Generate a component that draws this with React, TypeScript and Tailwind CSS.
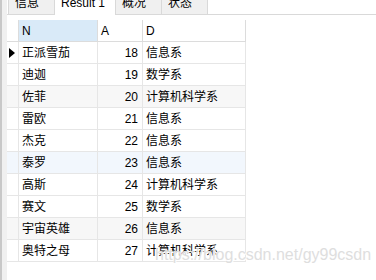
const rows: [string, number, string][] = [
  ['正派雪茄', 18, '信息系'],
  ['迪迦', 19, '数学系'],
  ['佐菲', 20, '计算机科学系'],
  ['雷欧', 21, '信息系'],
  ['杰克', 22, '信息系'],
  ['泰罗', 23, '信息系'],
  ['高斯', 24, '计算机科学系'],
  ['赛文', 25, '数学系'],
  ['宇宙英雄', 26, '信息系'],
  ['奥特之母', 27, '计算机科学系'],
];

const rowBg = (i: number) =>
  i === 2 || i === 8 ? 'bg-[#f7f7f7]' : i === 5 ? 'bg-[#f2f7fd]' : 'bg-white';

function Tab({ label, width, active }: { label: string; width: string; active?: boolean }) {
  return (
    <div
      className={`${width} h-[15px] overflow-hidden border-r border-[#d9d9d9] pl-[6px] ${
        active ? 'bg-white' : 'bg-[#f0f0f0] border-b'
      }`}
    >
      <div className="-mt-[3px] text-[12px] leading-[12px] text-black whitespace-nowrap">{label}</div>
    </div>
  );
}

export default function App() {
  return (
    <div
      className="relative flex w-[376px] h-[280px] overflow-hidden bg-white"
      style={{ fontFamily: '"Liberation Sans", "Noto Sans CJK SC", sans-serif' }}
    >
      {/* 左侧边条 */}
      <div className="w-[2px] bg-[#c8c8c8]" />
      <div className="w-[5px] bg-[#f0f0f0]" />

      <div className="flex-1 flex flex-col">
        {/* 标签栏 */}
        <div className="flex h-[15px]">
          <div className="w-[1px] border-b border-[#d9d9d9]" />
          <div className="w-[47px] h-[15px] overflow-hidden border-x border-b border-[#d9d9d9] bg-[#f0f0f0] pl-[6px]">
            <div className="-mt-[3px] text-[12px] leading-[12px] text-black">信息</div>
          </div>
          <Tab label="Result 1" width="w-[61px]" active />
          <Tab label="概况" width="w-[46px]" />
          <Tab label="状态" width="w-[46px]" />
          <div className="flex-1 border-b border-[#d9d9d9]" />
        </div>

        <div className="h-[5px]" />

        {/* 结果表格 */}
        <div className="grid grid-cols-[12px_79px_45px_103px] text-[12px] text-black">
          <div className="h-[22px] border-r border-b border-[#dcdcdc] bg-white" />
          <div className="h-[22px] border-r border-b border-[#dcdcdc] bg-[#d9eaf8] flex items-center pl-[3px]">N</div>
          <div className="h-[22px] border-r border-b border-[#dcdcdc] bg-white flex items-center pl-[3px]">A</div>
          <div className="h-[22px] border-r border-b border-[#dcdcdc] bg-white flex items-center pl-[3px]">D</div>

          {rows.map(([n, a, d], i) => (
            <div key={n} className="contents">
              <div className={`h-[22px] border-r border-b border-[#e6e6e6] flex items-center pl-[2px] ${rowBg(i)}`}>
                {i === 0 && (
                  <svg width="6" height="10" viewBox="0 0 6 10">
                    <path d="M0 0 L6 5 L0 10 Z" fill="#000" />
                  </svg>
                )}
              </div>
              <div className={`h-[22px] border-r border-b border-[#e6e6e6] flex items-center pl-[3px] whitespace-nowrap ${rowBg(i)}`}>
                {n}
              </div>
              <div className={`h-[22px] border-r border-b border-[#e6e6e6] flex items-center justify-end pr-[4px] ${rowBg(i)}`}>
                {a}
              </div>
              <div className={`h-[22px] border-r border-b border-[#e6e6e6] flex items-center pl-[3px] whitespace-nowrap ${rowBg(i)}`}>
                {d}
              </div>
            </div>
          ))}
        </div>
      </div>

      {/* 水印 */}
      <div
        className="absolute left-[155px] top-[246px] text-[16px] leading-[18px] text-[#dedede] whitespace-nowrap pointer-events-none"
        style={{ textShadow: '0 0 1px #fff, 1px 1px 0 #fff' }}
      >
        https://blog.csdn.net/gy99csdn
      </div>
    </div>
  );
}
